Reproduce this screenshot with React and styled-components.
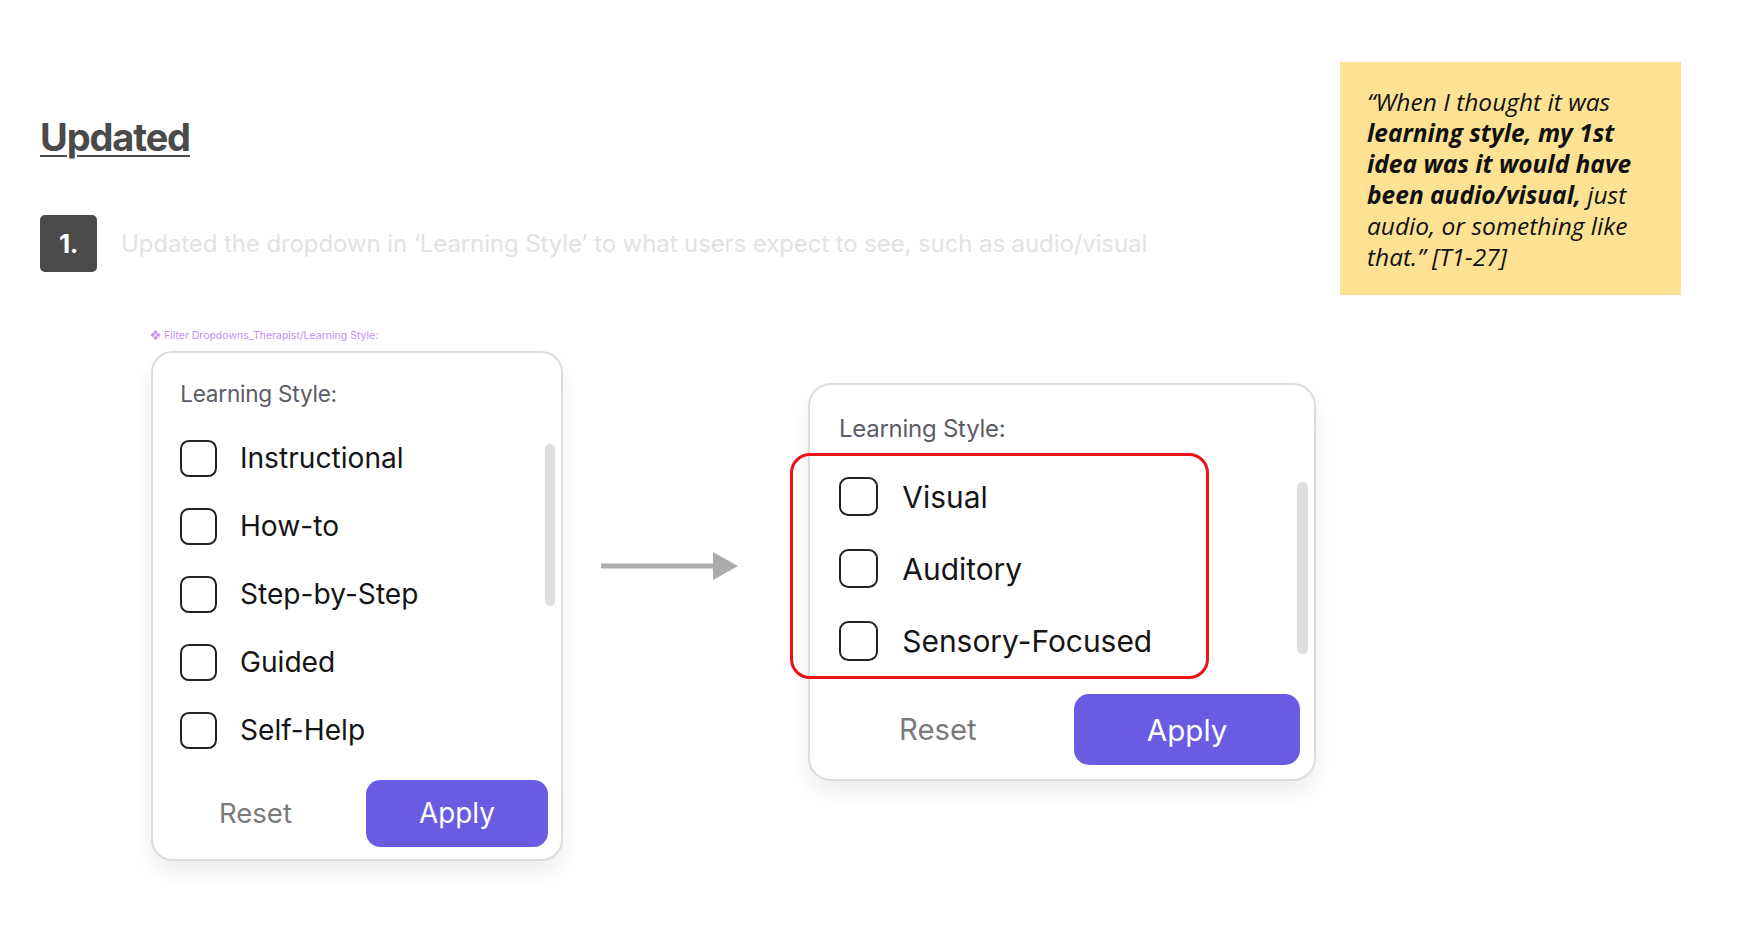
import React from "react";
import styled, { createGlobalStyle } from "styled-components";

const Global = createGlobalStyle`
  html, body { margin: 0; padding: 0; background: #ffffff; }
  body { font-family: Inter, "Noto Sans", sans-serif; }
  * { box-sizing: border-box; }
`;

const Page = styled.div`
  width: 1740px;
  height: 934px;
  background: #fff;
  overflow: hidden;
`;

const Top = styled.div`
  display: flex;
  justify-content: space-between;
  align-items: flex-start;
  padding: 62px 59px 0 40px;
`;

const Intro = styled.div`
  display: flex;
  flex-direction: column;
`;

const Title = styled.h1`
  margin: 54px 0 0;
  font-family: Inter, sans-serif;
  font-weight: 700;
  font-size: 38px;
  line-height: 42px;
  letter-spacing: -0.03em;
  color: #4a4a4a;
  text-decoration: underline;
  text-decoration-thickness: 2px;
  text-underline-offset: 4px;
  align-self: flex-start;
`;

const StepRow = styled.div`
  display: flex;
  align-items: center;
  gap: 24px;
  margin-top: 57px;
`;

const Badge = styled.div`
  width: 57px;
  height: 57px;
  border-radius: 5px;
  background: #4a4a4a;
  color: #fff;
  display: flex;
  align-items: center;
  justify-content: center;
  font-family: Inter, sans-serif;
  font-weight: 700;
  font-size: 26px;
  letter-spacing: -0.02em;
`;

const StepText = styled.p`
  margin: 0;
  font-family: Inter, sans-serif;
  font-size: 24px;
  color: #e2e2e2;
  letter-spacing: -0.004em;
`;

const Quote = styled.blockquote`
  margin: 0;
  width: 341px;
  height: 233px;
  background: #fde293;
  padding: 24px 10px 0 27px;
  font-family: "Open Sans", sans-serif;
  font-style: italic;
  font-size: 24.5px;
  line-height: 31px;
  color: #111;
  letter-spacing: 0;
  white-space: nowrap;
  b { font-weight: 700; }
`;

const Content = styled.div`
  display: flex;
  align-items: flex-start;
  margin-top: 34px;
  padding-left: 150px;
`;

const Group = styled.div`
  display: flex;
  flex-direction: column;
  gap: 8px;
`;

const ComponentLabel = styled.div`
  font-family: Inter, sans-serif;
  font-size: 10.5px;
  line-height: 14px;
  color: #c48ef6;
`;

const Card = styled.div`
  position: relative;
  width: ${(p) => p.$width}px;
  font-size: ${(p) => p.$base}px;
  margin-left: ${(p) => p.$offsetLeft || 0}px;
  margin-top: ${(p) => p.$offsetTop || 0}px;
  border: 2px solid #dcdcdc;
  border-radius: 1.35em;
  background: #fff;
  box-shadow: 0 12px 22px rgba(0, 0, 0, 0.07);
  padding: 1.74em 0.8em 0.78em 1.7em;
  display: flex;
  flex-direction: column;
  font-family: Inter, sans-serif;
`;

const CardTitle = styled.div`
  font-size: 1.41em;
  line-height: 1.17;
  color: #5b5b66;
  letter-spacing: -0.01em;
`;

const Body = styled.div`
  display: flex;
  margin-top: 1.05em;
`;

const List = styled.div`
  flex: 1;
  display: flex;
  flex-direction: column;
`;

const Option = styled.label`
  display: flex;
  align-items: center;
  height: 4.25em;
  gap: 1.42em;
  font-size: 1em;
`;

const Box = styled.span`
  width: 2.3125em;
  height: 2.3125em;
  border: 2px solid #222;
  border-radius: 0.55em;
  flex: none;
`;

const OptionText = styled.span`
  font-size: 1.76em;
  color: #151515;
  letter-spacing: 0;
`;

const Track = styled.div`
  width: 0.65em;
  height: 10.1em;
  margin-top: 1.28em;
  margin-right: -0.45em;
  border-radius: 0.4em;
  background: #dedede;
  flex: none;
`;

const Footer = styled.div`
  display: flex;
  align-items: center;
  margin-top: 1em;
  margin-left: -1.7em;
`;

const Reset = styled.button`
  flex: 1;
  border: none;
  background: none;
  font-family: Inter, sans-serif;
  font-size: 1.72em;
  color: #7a7a7a;
  padding: 0 0.28em 0 0;
  text-align: center;
`;

const Apply = styled.button`
  flex: 0 0 46.2%;
  height: 4.18em;
  border: none;
  border-radius: 0.9em;
  background: #6a5be3;
  color: #fff;
  font-family: Inter, sans-serif;
  font-size: 1em;
  span { font-size: 1.74em; }
`;

const Highlight = styled.div`
  position: absolute;
  left: -20px;
  top: 68px;
  width: 419px;
  height: 226px;
  border: 3px solid #ec1216;
  border-radius: 20px;
  pointer-events: none;
`;

const ArrowWrap = styled.div`
  margin: 223px 0 0 38px;
  width: 137px;
  height: 28px;
  display: flex;
`;

function Dropdown({ options, width, base, offsetLeft, offsetTop, highlight }) {
  return (
    <Card $width={width} $base={base} $offsetLeft={offsetLeft} $offsetTop={offsetTop}>
      <CardTitle>Learning Style:</CardTitle>
      <Body>
        <List>
          {options.map((o) => (
            <Option key={o}>
              <Box />
              <OptionText>{o}</OptionText>
            </Option>
          ))}
        </List>
        <Track />
      </Body>
      <Footer>
        <Reset>Reset</Reset>
        <Apply>
          <span>Apply</span>
        </Apply>
      </Footer>
      {highlight && <Highlight />}
    </Card>
  );
}

function Arrow() {
  return (
    <ArrowWrap>
      <svg width="137" height="28" viewBox="0 0 137 28">
        <rect x="0" y="11.5" width="114" height="5" fill="#ababab" />
        <polygon points="112,0 137,14 112,28" fill="#ababab" />
      </svg>
    </ArrowWrap>
  );
}

export default function App() {
  return (
    <Page>
      <Global />
      <Top>
        <Intro>
          <Title>Updated</Title>
          <StepRow>
            <Badge>1.</Badge>
            <StepText>
              Updated the dropdown in ‘Learning Style’ to what users expect to see, such as audio/visual
            </StepText>
          </StepRow>
        </Intro>
        <Quote>
          “When I thought it was
          <br />
          <b>learning style, my 1st</b>
          <br />
          <b>idea was it would have</b>
          <br />
          <b>been audio/visual,</b> just
          <br />
          audio, or something like
          <br />
          that.” [T1-27]
        </Quote>
      </Top>
      <Content>
        <Group>
          <ComponentLabel>❖ Filter Dropdowns_Therapist/Learning Style:</ComponentLabel>
          <Dropdown
            width={412}
            base={16}
            offsetLeft={1}
            options={["Instructional", "How-to", "Step-by-Step", "Guided", "Self-Help"]}
          />
        </Group>
        <Arrow />
        <Dropdown
          width={508}
          base={17}
          offsetLeft={70}
          offsetTop={54}
          highlight
          options={["Visual", "Auditory", "Sensory-Focused"]}
        />
      </Content>
    </Page>
  );
}
